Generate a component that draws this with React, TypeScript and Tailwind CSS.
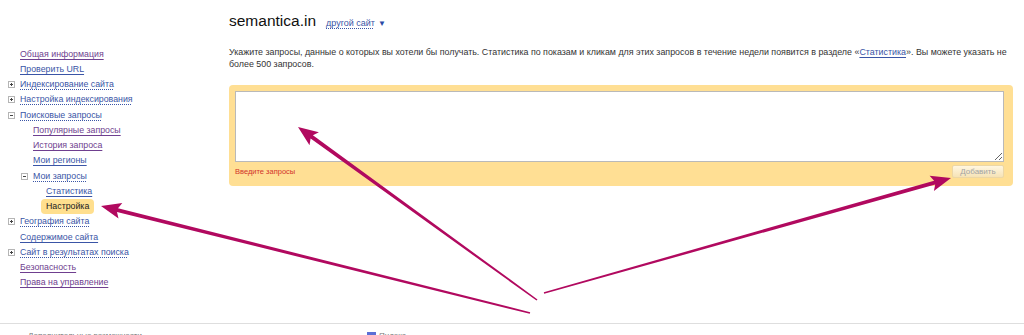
import React from 'react';

type Item = {
  t: string;
  lvl: number;
  c: 'v' | 'l' | 'a';
  u: 'solid' | 'dotted';
  icon?: 'plus' | 'minus';
};

const items: Item[] = [
  { t: 'Общая информация', lvl: 0, c: 'v', u: 'solid' },
  { t: 'Проверить URL', lvl: 0, c: 'l', u: 'solid' },
  { t: 'Индексирование сайта', lvl: 0, c: 'l', u: 'dotted', icon: 'plus' },
  { t: 'Настройка индексирования', lvl: 0, c: 'l', u: 'dotted', icon: 'plus' },
  { t: 'Поисковые запросы', lvl: 0, c: 'l', u: 'dotted', icon: 'minus' },
  { t: 'Популярные запросы', lvl: 1, c: 'v', u: 'solid' },
  { t: 'История запроса', lvl: 1, c: 'v', u: 'solid' },
  { t: 'Мои регионы', lvl: 1, c: 'l', u: 'solid' },
  { t: 'Мои запросы', lvl: 1, c: 'l', u: 'dotted', icon: 'minus' },
  { t: 'Статистика', lvl: 2, c: 'l', u: 'solid' },
  { t: 'Настройка', lvl: 2, c: 'a', u: 'solid' },
  { t: 'География сайта', lvl: 0, c: 'l', u: 'dotted', icon: 'plus' },
  { t: 'Содержимое сайта', lvl: 0, c: 'l', u: 'solid' },
  { t: 'Сайт в результатах поиска', lvl: 0, c: 'l', u: 'dotted', icon: 'plus' },
  { t: 'Безопасность', lvl: 0, c: 'v', u: 'solid' },
  { t: 'Права на управление', lvl: 0, c: 'v', u: 'solid' },
];

const indent = ['ml-[8px]', 'ml-[21px]', 'ml-[34px]'];

function TreeIcon({ kind }: { kind: 'plus' | 'minus' }) {
  return (
    <svg width="7" height="7" viewBox="0 0 7 7" className="block">
      <rect x="0.5" y="0.5" width="6" height="6" fill="#fff" stroke="#b5b5b5" />
      <line x1="2" y1="3.5" x2="5" y2="3.5" stroke="#444" strokeWidth="1" />
      {kind === 'plus' && <line x1="3.5" y1="2" x2="3.5" y2="5" stroke="#444" strokeWidth="1" />}
    </svg>
  );
}

function SideItem({ it }: { it: Item }) {
  const color = it.c === 'v' ? 'text-[#6f3f8f]' : 'text-[#3a55a6]';
  return (
    <div className={`flex h-[15.25px] items-center ${indent[it.lvl]}`}>
      <div className="flex w-[12px] items-center">{it.icon && <TreeIcon kind={it.icon} />}</div>
      {it.c === 'a' ? (
        <span className="-ml-[5px] flex h-[15px] items-center rounded-[4px] bg-[#ffdf8e] px-[5px] text-[#222]">
          {it.t}
        </span>
      ) : (
        <span
          className={`${color} underline underline-offset-[2px] ${
            it.u === 'dotted' ? 'decoration-dotted' : 'decoration-solid'
          }`}
        >
          {it.t}
        </span>
      )}
    </div>
  );
}

function arrowPoints(x1: number, y1: number, x2: number, y2: number) {
  const headLen = 20;
  const headHalf = 8;
  const w0 = 0.8;
  const w1 = 2;
  const dx = x2 - x1;
  const dy = y2 - y1;
  const L = Math.hypot(dx, dy);
  const ux = dx / L;
  const uy = dy / L;
  const nx = -uy;
  const ny = ux;
  const bx = x2 - ux * headLen;
  const by = y2 - uy * headLen;
  const nbx = x2 - ux * (headLen - 3);
  const nby = y2 - uy * (headLen - 3);
  const pts = [
    [x1 + nx * w0, y1 + ny * w0],
    [nbx + nx * w1, nby + ny * w1],
    [bx + nx * headHalf, by + ny * headHalf],
    [x2, y2],
    [bx - nx * headHalf, by - ny * headHalf],
    [nbx - nx * w1, nby - ny * w1],
    [x1 - nx * w0, y1 - ny * w0],
  ];
  return pts.map((p) => `${p[0].toFixed(1)},${p[1].toFixed(1)}`).join(' ');
}

export default function App() {
  return (
    <div className="relative h-[335px] w-full overflow-hidden bg-white font-['Liberation_Sans','Arial',sans-serif] text-[8.8px] text-[#333]">
      <div className="flex h-[323px]">
        <aside className="w-[229px] shrink-0 pt-[46.5px]">
          {items.map((it) => (
            <SideItem key={it.t} it={it} />
          ))}
        </aside>
        <main className="min-w-0 flex-1 pr-[11px] pt-[11px]">
          <div className="flex items-baseline gap-[10px]">
            <span className="text-[15.5px] leading-[20px] text-[#111]">semantica.in</span>
            <span className="flex items-baseline gap-[3px] text-[9px] text-[#3a55a6]">
              <span className="underline decoration-dotted underline-offset-[2px]">другой сайт</span>
              <span className="text-[8px] text-[#2a4aa6]">▼</span>
            </span>
          </div>
          <p className="mt-[15px] text-[8.9px] leading-[12px] text-[#333]">
            Укажите запросы, данные о которых вы хотели бы получать. Статистика по показам и кликам для этих
            запросов в течение недели появится в разделе «<a className="text-[#3a55a6] underline underline-offset-[2px]">Статистика</a>». Вы можете
            указать не более 500 запросов.
          </p>
          <div className="mt-[15px] rounded-[4px] bg-[#ffdf94] pb-[8px] pl-[6px] pr-[9px] pt-[6px]">
            <textarea className="block h-[71px] w-full border border-[#b9b9b9] bg-white" />
            <div className="mt-[3px] flex items-center justify-between">
              <span className="text-[7.5px] text-[#d2332a]">Введите запросы</span>
              <button className="flex h-[13px] w-[52px] items-center justify-center rounded-[2px] border border-[#ecd7a6] bg-gradient-to-b from-[#fff6e0] to-[#f6e3b6] text-[8px] text-[#a3a3a3]">
                Добавить
              </button>
            </div>
          </div>
        </main>
      </div>
      <footer className="border-t border-[#dedede]">
        <div className="flex items-start pt-[7px] text-[8px] leading-[10px] text-[#777]">
          <span className="ml-[28px]">Дополнительные возможности</span>
          <span className="ml-[225px] flex items-start gap-[3px]">
            <span className="mt-[1px] inline-block h-[8px] w-[9px] bg-[#5c6fd6]" />
            <span>Яндекс</span>
          </span>
        </div>
      </footer>
      <svg className="pointer-events-none absolute left-0 top-0" width="1024" height="335">
        <polygon points={arrowPoints(530, 313, 101, 206)} fill="#b1095f" />
        <polygon points={arrowPoints(537, 300, 298, 127)} fill="#b1095f" />
        <polygon points={arrowPoints(544, 293, 951, 178)} fill="#b1095f" />
      </svg>
    </div>
  );
}
